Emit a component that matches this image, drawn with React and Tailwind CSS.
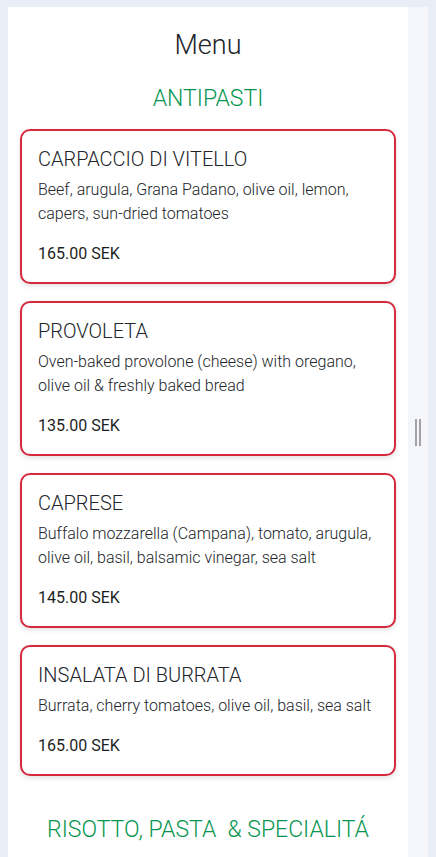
import React from "react";

const items = [
  {
    name: "CARPACCIO DI VITELLO",
    desc: "Beef, arugula, Grana Padano, olive oil, lemon, capers, sun-dried tomatoes",
    price: "165.00 SEK",
  },
  {
    name: "PROVOLETA",
    desc: "Oven-baked provolone (cheese) with oregano, olive oil & freshly baked bread",
    price: "135.00 SEK",
  },
  {
    name: "CAPRESE",
    desc: "Buffalo mozzarella (Campana), tomato, arugula, olive oil, basil, balsamic vinegar, sea salt",
    price: "145.00 SEK",
  },
  {
    name: "INSALATA DI BURRATA",
    desc: "Burrata, cherry tomatoes, olive oil, basil, sea salt",
    price: "165.00 SEK",
  },
];

function Card({ item }) {
  return (
    <div className="rounded-[10px] border-2 border-[#d42a3b] bg-white px-4 pt-4 pb-4 shadow-[0_2px_5px_rgba(0,0,0,0.12)]">
      <div className="text-[20px] leading-[24px] font-light text-[#212529]">{item.name}</div>
      <div className="mt-[7px] text-[16px] leading-[24px] font-light text-[#212529]">{item.desc}</div>
      <div className="mt-4 text-[16px] leading-[24px] font-normal text-[#1c1f23]">{item.price}</div>
    </div>
  );
}

export default function App() {
  return (
    <div
      className="flex h-[857px] overflow-hidden bg-[#e9edf5] pt-[7px] pl-[8px]"
      style={{ fontFamily: "Roboto, 'Liberation Sans', sans-serif" }}
    >
      <div className="w-[400px] shrink-0 bg-white px-3 pt-[22px]">
        <h1 className="text-center text-[27px] leading-[32px] font-light text-[#212529]">Menu</h1>
        <h2 className="mt-[24px] text-center text-[23px] leading-[28px] font-light text-[#079650]">ANTIPASTI</h2>
        <div className="mt-[16px] flex flex-col gap-[17px]">
          {items.map((it) => (
            <Card key={it.name} item={it} />
          ))}
        </div>
        <h2 className="mt-[40px] whitespace-pre text-center text-[23px] leading-[28px] font-light text-[#079650]">
          {"RISOTTO, PASTA  & SPECIALITÁ"}
        </h2>
      </div>
      <div className="flex w-[20px] shrink-0 items-center justify-center bg-[#f4f6fb]">
        <div className="flex gap-[1.5px]">
          <div className="h-[27px] w-[2px] bg-[#a3a3a3]" />
          <div className="h-[27px] w-[2px] bg-[#a3a3a3]" />
        </div>
      </div>
    </div>
  );
}
